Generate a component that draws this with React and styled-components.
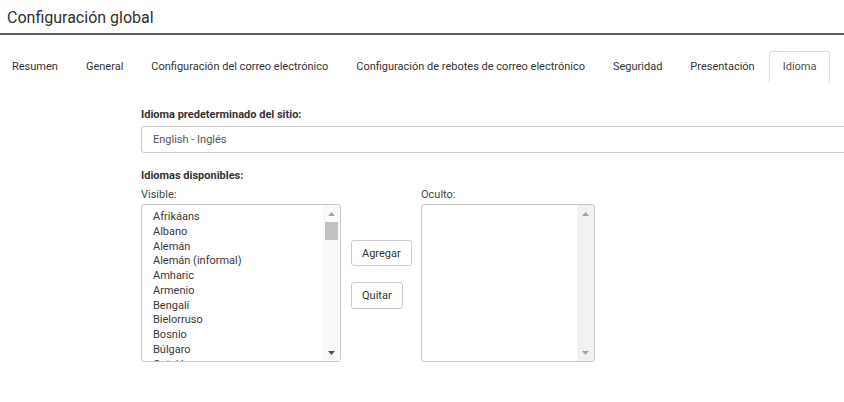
import React from "react";
import styled, { createGlobalStyle } from "styled-components";

const GlobalStyle = createGlobalStyle`
  html, body {
    margin: 0;
    padding: 0;
    background: #ffffff;
    overflow: hidden;
  }
  body {
    font-family: Roboto, "Liberation Sans", Arial, sans-serif;
    color: #333333;
  }
`;

const Page = styled.div`
  width: 844px;
  height: 402px;
  overflow: hidden;
`;

const Title = styled.h1`
  margin: 0;
  padding: 8px 7px 5px;
  font-size: 16px;
  line-height: 20px;
  font-weight: 400;
  color: #2f2f2f;
  border-bottom: 2px solid #5a5f64;
`;

const TabList = styled.nav`
  display: flex;
  flex-wrap: nowrap;
  margin: 16px 0 0 -2px;
  border-bottom: 1px solid #dddddd;
`;

const Tab = styled.div`
  flex-shrink: 0;
  white-space: nowrap;
  padding: 0 13px;
  font-size: 11px;
  line-height: 30px;
  color: ${(p) => (p.$warn ? "#f0ad4e" : p.$active ? "#555555" : "#333333")};
  border: 1px solid ${(p) => (p.$active ? "#dddddd" : "transparent")};
  border-bottom-color: ${(p) => (p.$active ? "#ffffff" : "transparent")};
  border-radius: 3px 3px 0 0;
  margin-bottom: -1px;
  background: #ffffff;
`;

const Content = styled.section`
  padding: 24px 0 0 141px;
  width: 760px;
`;

const SectionLabel = styled.div`
  font-size: 11px;
  line-height: 16px;
  font-weight: 700;
  color: #333333;
  margin: ${(p) => p.$mt || 0}px 0 ${(p) => p.$mb || 0}px;
`;

const TextInput = styled.div`
  box-sizing: border-box;
  width: 100%;
  height: 27px;
  border: 1px solid #cccccc;
  border-radius: 3px;
  padding: 0 11px;
  display: flex;
  align-items: center;
  font-size: 11px;
  color: #555555;
`;

const ListsGrid = styled.div`
  display: grid;
  grid-template-columns: 200px 80px 174px;
  grid-template-rows: auto auto;
  row-gap: 1px;
`;

const FieldLabel = styled.div`
  font-size: 11px;
  line-height: 16px;
  color: #444444;
`;

const ListBox = styled.div`
  box-sizing: border-box;
  height: 158px;
  border: 1px solid #c8c8c8;
  border-radius: 3px;
  display: flex;
  overflow: hidden;
  background: #ffffff;
`;

const Items = styled.ul`
  flex: 1;
  margin: 0;
  padding: 5px 0 0 11px;
  list-style: none;
  overflow: hidden;
`;

const Item = styled.li`
  font-size: 11px;
  line-height: 14.75px;
  color: #383838;
  white-space: nowrap;
`;

const ScrollTrack = styled.div`
  width: 17px;
  flex-shrink: 0;
  display: flex;
  flex-direction: column;
  background: ${(p) => (p.$light ? "#f9f9f9" : "#f1f1f1")};
`;

const ArrowButton = styled.div`
  height: 17px;
  flex-shrink: 0;
  display: flex;
  align-items: center;
  justify-content: center;
`;

const Thumb = styled.div`
  height: 18px;
  margin: 0 2px;
  background: #c1c1c1;
`;

const TrackSpace = styled.div`
  flex: 1;
`;

const ButtonStack = styled.div`
  display: flex;
  flex-direction: column;
  align-items: flex-start;
  gap: 16px;
  padding: 36px 0 0 10px;
`;

const Button = styled.button`
  box-sizing: border-box;
  height: ${(p) => p.$h || 26}px;
  padding: 0 10px;
  border: 1px solid #cccccc;
  border-radius: 3px;
  background: #ffffff;
  font-family: Roboto, "Liberation Sans", Arial, sans-serif;
  font-size: 11px;
  color: #333333;
  cursor: pointer;
`;

const Arrow = ({ up, color }) => (
  <svg width="7" height="4" viewBox="0 0 7 4">
    <polygon points={up ? "0,4 7,4 3.5,0" : "0,0 7,0 3.5,4"} fill={color} />
  </svg>
);

const ScrollBar = ({ light, upColor, downColor, thumb }) => (
  <ScrollTrack $light={light}>
    <ArrowButton>
      <Arrow up color={upColor} />
    </ArrowButton>
    {thumb && <Thumb />}
    <TrackSpace />
    <ArrowButton>
      <Arrow color={downColor} />
    </ArrowButton>
  </ScrollTrack>
);

const tabs = [
  "Resumen",
  "General",
  "Configuración del correo electrónico",
  "Configuración de rebotes de correo electrónico",
  "Seguridad",
  "Presentación",
  "Idioma",
];

const languages = [
  "Afrikáans",
  "Albano",
  "Alemán",
  "Alemán (informal)",
  "Amharic",
  "Armenio",
  "Bengalí",
  "Bielorruso",
  "Bosnio",
  "Búlgaro",
  "Catalán",
];

export default function App() {
  return (
    <Page>
      <GlobalStyle />
      <Title>Configuración global</Title>
      <TabList>
        {tabs.map((t) => (
          <Tab key={t} $active={t === "Idioma"}>
            {t}
          </Tab>
        ))}
        <Tab $warn>Licencia</Tab>
      </TabList>
      <Content>
        <SectionLabel $mb={3}>Idioma predeterminado del sitio:</SectionLabel>
        <TextInput>English - Inglés</TextInput>
        <SectionLabel $mt={15} $mb={3}>Idiomas disponibles:</SectionLabel>
        <ListsGrid>
          <FieldLabel>Visible:</FieldLabel>
          <div />
          <FieldLabel>Oculto:</FieldLabel>
          <ListBox>
            <Items>
              {languages.map((l) => (
                <Item key={l}>{l}</Item>
              ))}
            </Items>
            <ScrollBar light thumb upColor="#a3a3a3" downColor="#505050" />
          </ListBox>
          <ButtonStack>
            <Button $h={26}>Agregar</Button>
            <Button $h={27}>Quitar</Button>
          </ButtonStack>
          <ListBox>
            <Items />
            <ScrollBar upColor="#a3a3a3" downColor="#a3a3a3" />
          </ListBox>
        </ListsGrid>
      </Content>
    </Page>
  );
}
